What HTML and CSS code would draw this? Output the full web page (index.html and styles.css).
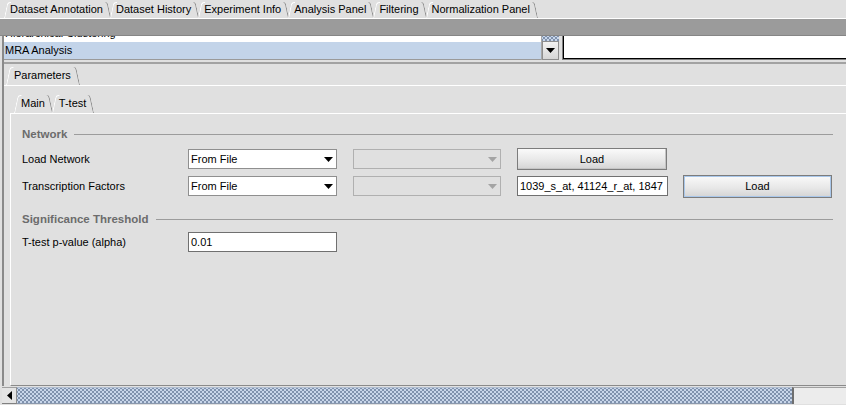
FILE: index.html
```html
<!DOCTYPE html>
<html>
<head>
<meta charset="utf-8">
<link rel="stylesheet" href="styles.css">
</head>
<body>
<div class="app">
  <div class="tabbar">
    <span class="tab first">Dataset Annotation</span><span class="tab">Dataset History</span><span class="tab">Experiment Info</span><span class="tab">Analysis Panel</span><span class="tab">Filtering</span><span class="tab">Normalization Panel</span>
  </div>
  <div class="graybar"></div>
  <div class="body">
    <div class="listrow">
      <div class="list">
        <div class="list-item">Hierarchical Clustering</div>
        <div class="list-item selected">MRA Analysis</div>
      </div>
      <div class="vscroll">
        <div class="vthumb"></div>
        <div class="vbtn"><svg width="9" height="5" viewBox="0 0 9 5"><polygon points="0,0 9,0 4.5,5" fill="#000"/></svg></div>
      </div>
      <div class="descbox"></div>
    </div>
    <div class="sep"></div>
    <div class="params">
      <div class="ptabs"><span class="tab ptab">Parameters</span></div>
      <div class="ppanel">
        <div class="itabs"><span class="tab itab">Main</span><span class="tab itab">T-test</span></div>
        <div class="ipanel">
          <div class="section-title"><span>Network</span><i class="rule"></i></div>
          <div class="grid">
            <div class="label">Load Network</div>
            <div class="combo"><span>From File</span><svg width="9" height="5" viewBox="0 0 9 5"><polygon points="0,0 9,0 4.5,5" fill="#000"/></svg></div>
            <div class="combo disabled"><span></span><svg width="9" height="5" viewBox="0 0 9 5"><polygon points="0,0 9,0 4.5,5" fill="#a4a4a4"/></svg></div>
            <div class="button">Load</div>
            <div></div>

            <div class="label">Transcription Factors</div>
            <div class="combo"><span>From File</span><svg width="9" height="5" viewBox="0 0 9 5"><polygon points="0,0 9,0 4.5,5" fill="#000"/></svg></div>
            <div class="combo disabled"><span></span><svg width="9" height="5" viewBox="0 0 9 5"><polygon points="0,0 9,0 4.5,5" fill="#a4a4a4"/></svg></div>
            <div class="field wide">1039_s_at, 41124_r_at, 1847</div>
            <div class="button focused">Load</div>
          </div>
          <div class="section-title sig"><span>Significance Threshold</span><i class="rule"></i></div>
          <div class="grid single">
            <div class="label">T-test p-value (alpha)</div>
            <div class="field">0.01</div>
          </div>
        </div>
      </div>
    </div>
  </div>
  <div class="hscroll">
    <div class="hbtn"><svg width="5" height="9" viewBox="0 0 5 9"><polygon points="5,0 5,9 0,4.5" fill="#000"/></svg></div>
    <div class="hthumb"></div>
    <div class="htrack"></div>
  </div>
</div>
</body>
</html>
```

FILE: styles.css
```css
html, body {
  margin: 0;
  padding: 0;
}
body {
  background: #e0e0e0;
  font-family: "Liberation Sans", Arial, sans-serif;
  font-size: 11px;
  color: #000;
}
.app {
  width: 846px;
  height: 405px;
  overflow: hidden;
}

/* tabs */
.tab {
  position: relative;
  display: inline-block;
  padding: 0 8px 0 6px;
  margin-right: -1px;
  white-space: nowrap;
}
.tab::before {
  content: "";
  position: absolute;
  left: 0;
  top: 2px;
  bottom: 0;
  width: 3px;
  border-left: 1px solid #fff;
  border-top: 1px solid #fff;
  border-top-left-radius: 3px;
  transform: skewX(-12deg);
  transform-origin: bottom left;
}
.tab::after {
  content: "";
  position: absolute;
  right: 0;
  top: 2px;
  bottom: 0;
  width: 3px;
  border-right: 1px solid #8c8c8c;
  border-top-right-radius: 3px;
  transform: skewX(12deg);
  transform-origin: bottom right;
}

.tabbar {
  height: 18px;
  line-height: 18px;
  border-bottom: 1px solid #fff;
  padding-left: 4px;
  display: flex;
}
.graybar {
  height: 16px;
  background: #9b9b9b;
  border-bottom: 1px solid #868686;
}

.body {
  margin-left: 2px;
  border-left: 2px solid #8a8a8a;
  height: 350px;
  display: flex;
  flex-direction: column;
}

.listrow {
  height: 24px;
  display: flex;
}
.list {
  width: 537px;
  overflow: hidden;
  background: #fff;
  border-bottom: 1px solid #9a9a9a;
  box-sizing: border-box;
}
.list-item {
  height: 17px;
  line-height: 17px;
  padding-left: 1px;
  white-space: nowrap;
}
.list-item:first-child {
  margin-top: -11px;
}
.list-item.selected {
  background: #c3d4e9;
}
.vscroll {
  width: 18px;
  display: flex;
  flex-direction: column;
  border-left: 1px solid #a8a8a8;
  box-sizing: border-box;
}
.vthumb,
.hthumb {
  background-color: #c8d6ea;
  background-image:
    radial-gradient(circle, #7d90ab 0.7px, transparent 1px),
    radial-gradient(circle, #7d90ab 0.7px, transparent 1px);
  background-size: 4px 4px, 4px 4px;
  background-position: 0 0, 2px 2px;
}
.vthumb {
  height: 5px;
}
.vbtn {
  flex: 1;
  background: linear-gradient(#f2f2f2, #d6d6d6);
  border: 1px solid #8e8e8e;
  display: flex;
  align-items: center;
  justify-content: center;
}
.descbox {
  flex: 1;
  margin-left: 3px;
  background: #fff;
  border-left: 1px solid #808080;
  border-bottom: 1px solid #808080;
  box-shadow: inset 1px -1px 0 #000;
}
.sep {
  margin-top: 2px;
  border-top: 2px solid #a2a2a2;
}

.params {
  flex: 1;
  display: flex;
  flex-direction: column;
}
.ptabs {
  height: 21px;
  display: flex;
  align-items: flex-end;
  padding-left: 2px;
}
.ptab {
  height: 20px;
  line-height: 20px;
  padding: 0 9px 0 8px;
}
.ppanel {
  flex: 1;
  display: flex;
  flex-direction: column;
  border-top: 1px solid #fff;
  padding: 7px 0 0 6px;
}
.itabs {
  height: 20px;
  display: flex;
  padding-left: 4px;
}
.itab {
  height: 20px;
  line-height: 20px;
  padding: 0 8px 0 7px;
}
.ipanel {
  flex: 1;
  border-top: 1px solid #fff;
  border-left: 1px solid #fff;
  border-bottom: 1px solid #8a8a8a;
  padding: 14px 13px 0 11px;
}

.section-title {
  display: flex;
  align-items: center;
  height: 13px;
  line-height: 13px;
  font-weight: bold;
  color: #6c6c6c;
  font-size: 11.5px;
}
.section-title .rule {
  flex: 1;
  margin-left: 7px;
  border-top: 1px solid #9c9c9c;
}
.section-title.sig {
  margin-top: 16px;
}

.grid {
  margin-top: 7px;
  display: grid;
  grid-template-columns: 150px 149px 148px 150px 149px;
  grid-auto-rows: 22px;
  column-gap: 16px;
  row-gap: 5px;
  align-items: center;
}
.grid.single {
  margin-top: 6px;
  grid-auto-rows: 20px;
}
.label {
  white-space: nowrap;
}
.combo {
  height: 20px;
  box-sizing: border-box;
  background: #fff;
  border: 1px solid #8f8f8f;
  display: flex;
  align-items: center;
  justify-content: space-between;
  padding: 0 3px 0 2px;
}
.combo.disabled {
  background: #e0e0e0;
  border-color: #b0b0b0;
}
.button {
  height: 22px;
  box-sizing: border-box;
  border: 1px solid #7c7c7c;
  background: linear-gradient(#fafafa, #e6e6e6 60%, #d4d4d4);
  box-shadow: inset -1px -1px 0 #c4c4c4;
  display: flex;
  align-items: center;
  justify-content: center;
}
.button.focused {
  height: 23px;
  box-shadow: inset 0 0 0 1px #a9c7ea;
}
.field {
  height: 20px;
  box-sizing: border-box;
  background: #fff;
  border: 1px solid #707070;
  line-height: 18px;
  padding-left: 2px;
  white-space: nowrap;
  overflow: hidden;
}
.field.wide {
  width: 151px;
}

.hscroll {
  margin: 1px 0 0 2px;
  height: 17px;
  display: flex;
}
.hbtn {
  width: 15px;
  box-sizing: border-box;
  border-right: 1px solid #8e8e8e;
  border-top: 1px solid #a0a0a0;
  border-bottom: 1px solid #808080;
  background: #e4e4e4;
  display: flex;
  align-items: center;
  justify-content: center;
}
.hthumb {
  width: 775px;
  border-top: 1px solid #b0bdd0;
  border-bottom: 1px solid #8a98ad;
  box-sizing: border-box;
}
.htrack {
  flex: 1;
  background: #ececec;
  border-left: 2px solid #6f6f6f;
  border-top: 1px solid #a0a0a0;
  box-sizing: border-box;
}
```
